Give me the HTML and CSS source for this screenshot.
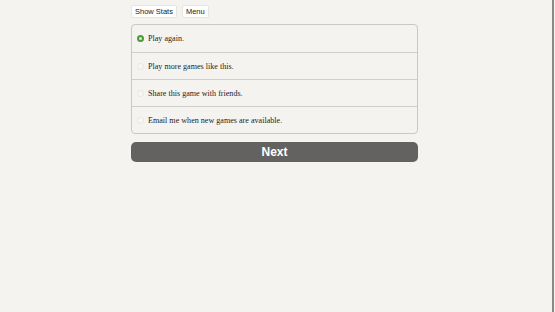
FILE: index.html
```html
<!DOCTYPE html>
<html lang="en">
  <head>
    <meta charset="UTF-8" />
    <title>Game Over</title>
    <link rel="stylesheet" href="styles.css">
  </head>
  <body>
    <div class="page">
      <div class="toolbar">
        <button class="tool-button">Show Stats</button>
        <button class="tool-button">Menu</button>
      </div>

      <div class="choices">
        <label class="choice">
          <span class="radio checked"></span>
          Play again.
        </label>
        <label class="choice">
          <span class="radio"></span>
          Play more games like this.
        </label>
        <label class="choice">
          <span class="radio"></span>
          Share this game with friends.
        </label>
        <label class="choice">
          <span class="radio"></span>
          Email me when new games are available.
        </label>
      </div>

      <button class="next-button">Next</button>
    </div>
    <div class="edge"></div>
  </body>
</html>
```

FILE: styles.css
```css
html, body {
  height: 100%;
}

body {
  background: #f4f3ef;
  margin: 0;
  font-family: "Liberation Serif", serif;
  color: #1e1e1e;
  display: flex;
}

.page {
  width: 287px;
  margin-left: 131px;
  padding-top: 5px;
}

.edge {
  margin-left: auto;
  width: 2px;
  margin-right: 1px;
  background: #8a8a8a;
}

.toolbar {
  display: flex;
  gap: 5px;
  margin-bottom: 6px;
}

.tool-button {
  font-family: "Liberation Sans", sans-serif;
  font-size: 7.5px;
  color: #222;
  background: #fff;
  border: 1px solid #e6e5e0;
  border-radius: 2px;
  padding: 0 3px;
  height: 13px;
  line-height: 11px;
}

.choices {
  border: 1px solid #c9c8c3;
  border-radius: 4px;
  background: #f4f3ef;
}

.choice {
  display: flex;
  align-items: center;
  gap: 4px;
  height: 27px;
  padding-left: 5px;
  font-size: 8.1px;
  border-top: 1px solid #cfceca;
  box-sizing: border-box;
}

.choice:first-child {
  border-top: none;
}

.radio {
  width: 5px;
  height: 5px;
  border-radius: 50%;
  border: 1px solid #e6e5e1;
  background: #f8f7f4;
}

.radio.checked {
  border: 2px solid #4d9a3e;
  width: 3px;
  height: 3px;
  background: #dfe9d8;
}

.next-button {
  display: block;
  width: 100%;
  margin-top: 8px;
  height: 20px;
  border: none;
  border-radius: 5px;
  background: #636260;
  color: #fff;
  font-family: "Liberation Sans", sans-serif;
  font-weight: bold;
  font-size: 12px;
}
```
